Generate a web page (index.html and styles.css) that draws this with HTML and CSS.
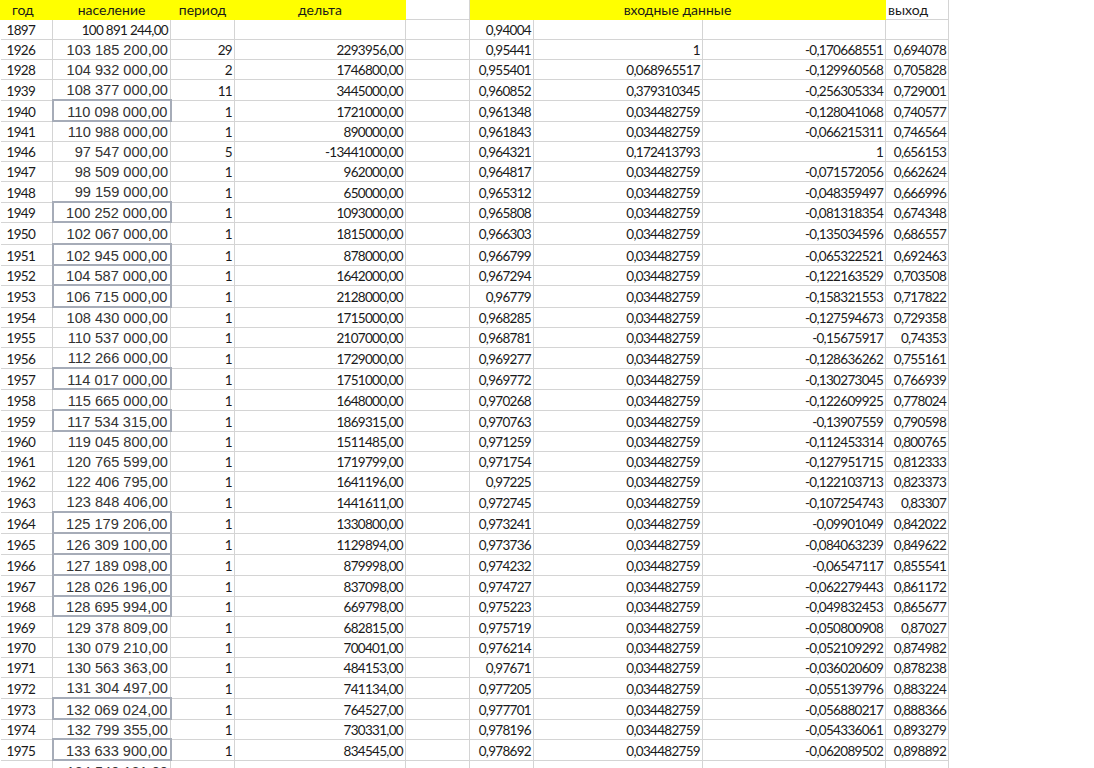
FILE: index.html
```html
<!DOCTYPE html>
<html lang="ru">
<head>
  <meta charset="UTF-8">
  <title>Население</title>
  <link rel="stylesheet" href="styles.css">
</head>
<body>
  <table class="sheet">
    <colgroup>
      <col class="c-year"><col class="c-pop"><col class="c-period"><col class="c-delta"><col class="c-gap">
      <col class="c-in1"><col class="c-in2"><col class="c-in3"><col class="c-out">
    </colgroup>
    <thead>
      <tr>
        <th class="hl year">год</th><th class="hl">население</th><th class="hl">период</th><th class="hl">дельта</th><th></th>
        <th class="hl" colspan="3">входные данные</th><th class="left">выход</th>
      </tr>
    </thead>
    <tbody id="rows"></tbody>
  </table>
  <script src="app.js"></script>
</body>
</html>
```

FILE: styles.css
```css
* {
  box-sizing: border-box;
}

body {
  margin: 0;
  height: 768px;
  overflow: hidden;
  background: #fff;
  font-family: Lato, "Open Sans", sans-serif;
  font-size: 14px;
  color: #1a1a1a;
}

.sheet {
  width: 948px;
  table-layout: fixed;
  border-collapse: collapse;
}

.c-year { width: 52px; }
.c-pop { width: 118px; }
.c-period { width: 64px; }
.c-delta { width: 171px; }
.c-gap { width: 64px; }
.c-in1 { width: 64px; }
.c-in2 { width: 169px; }
.c-in3 { width: 183px; }
.c-out { width: 63px; }

th, td {
  padding: 2px 2px 0;
  border: 1px solid #d4d4d4;
  white-space: nowrap;
  overflow: hidden;
  line-height: 16px;
  text-align: right;
}

/* цифры в Calibri уже, чем в Lato */
td {
  font-size: 13.5px;
  letter-spacing: -0.7px;
}

thead th {
  height: 19px;
  border-top: none;
  font-weight: normal;
  text-align: center;
}

.hl {
  background: #ffff00;
  border-color: #ffff00;
}

thead .year {
  text-align: left;
  padding-left: 11px;
}

thead .left {
  text-align: left;
}

.h20 { height: 20px; }
.h21 { height: 21px; }
.h22 { height: 22px; }

td:first-child {
  text-align: left;
  padding-left: 6px;
  border-left: none;
}

.pop {
  font-family: "Liberation Sans", Arial, sans-serif;
  font-size: 14.6px;
  letter-spacing: 0;
  color: #333;
}

.pop.small {
  font-family: Lato, sans-serif;
  font-size: 13.5px;
  letter-spacing: -0.7px;
  color: #1a1a1a;
}

.pop.boxed {
  border: 2px solid #a6acb8;
}
```

FILE: app.js
```js
// год, население, период, дельта, вход1, вход2, вход3, выход, рамка
const data = [
  ["1897", "100 891 244,00", "", "", "0,94004", "", "", "", 0],
  ["1926", "103 185 200,00", "29", "2293956,00", "0,95441", "1", "-0,170668551", "0,694078", 0],
  ["1928", "104 932 000,00", "2", "1746800,00", "0,955401", "0,068965517", "-0,129960568", "0,705828", 0],
  ["1939", "108 377 000,00", "11", "3445000,00", "0,960852", "0,379310345", "-0,256305334", "0,729001", 0],
  ["1940", "110 098 000,00", "1", "1721000,00", "0,961348", "0,034482759", "-0,128041068", "0,740577", 1],
  ["1941", "110 988 000,00", "1", "890000,00", "0,961843", "0,034482759", "-0,066215311", "0,746564", 0],
  ["1946", "97 547 000,00", "5", "-13441000,00", "0,964321", "0,172413793", "1", "0,656153", 0],
  ["1947", "98 509 000,00", "1", "962000,00", "0,964817", "0,034482759", "-0,071572056", "0,662624", 0],
  ["1948", "99 159 000,00", "1", "650000,00", "0,965312", "0,034482759", "-0,048359497", "0,666996", 0],
  ["1949", "100 252 000,00", "1", "1093000,00", "0,965808", "0,034482759", "-0,081318354", "0,674348", 1],
  ["1950", "102 067 000,00", "1", "1815000,00", "0,966303", "0,034482759", "-0,135034596", "0,686557", 0],
  ["1951", "102 945 000,00", "1", "878000,00", "0,966799", "0,034482759", "-0,065322521", "0,692463", 1],
  ["1952", "104 587 000,00", "1", "1642000,00", "0,967294", "0,034482759", "-0,122163529", "0,703508", 1],
  ["1953", "106 715 000,00", "1", "2128000,00", "0,96779", "0,034482759", "-0,158321553", "0,717822", 1],
  ["1954", "108 430 000,00", "1", "1715000,00", "0,968285", "0,034482759", "-0,127594673", "0,729358", 0],
  ["1955", "110 537 000,00", "1", "2107000,00", "0,968781", "0,034482759", "-0,15675917", "0,74353", 0],
  ["1956", "112 266 000,00", "1", "1729000,00", "0,969277", "0,034482759", "-0,128636262", "0,755161", 0],
  ["1957", "114 017 000,00", "1", "1751000,00", "0,969772", "0,034482759", "-0,130273045", "0,766939", 1],
  ["1958", "115 665 000,00", "1", "1648000,00", "0,970268", "0,034482759", "-0,122609925", "0,778024", 0],
  ["1959", "117 534 315,00", "1", "1869315,00", "0,970763", "0,034482759", "-0,13907559", "0,790598", 1],
  ["1960", "119 045 800,00", "1", "1511485,00", "0,971259", "0,034482759", "-0,112453314", "0,800765", 0],
  ["1961", "120 765 599,00", "1", "1719799,00", "0,971754", "0,034482759", "-0,127951715", "0,812333", 0],
  ["1962", "122 406 795,00", "1", "1641196,00", "0,97225", "0,034482759", "-0,122103713", "0,823373", 0],
  ["1963", "123 848 406,00", "1", "1441611,00", "0,972745", "0,034482759", "-0,107254743", "0,83307", 0],
  ["1964", "125 179 206,00", "1", "1330800,00", "0,973241", "0,034482759", "-0,09901049", "0,842022", 1],
  ["1965", "126 309 100,00", "1", "1129894,00", "0,973736", "0,034482759", "-0,084063239", "0,849622", 1],
  ["1966", "127 189 098,00", "1", "879998,00", "0,974232", "0,034482759", "-0,06547117", "0,855541", 1],
  ["1967", "128 026 196,00", "1", "837098,00", "0,974727", "0,034482759", "-0,062279443", "0,861172", 1],
  ["1968", "128 695 994,00", "1", "669798,00", "0,975223", "0,034482759", "-0,049832453", "0,865677", 1],
  ["1969", "129 378 809,00", "1", "682815,00", "0,975719", "0,034482759", "-0,050800908", "0,87027", 0],
  ["1970", "130 079 210,00", "1", "700401,00", "0,976214", "0,034482759", "-0,052109292", "0,874982", 0],
  ["1971", "130 563 363,00", "1", "484153,00", "0,97671", "0,034482759", "-0,036020609", "0,878238", 0],
  ["1972", "131 304 497,00", "1", "741134,00", "0,977205", "0,034482759", "-0,055139796", "0,883224", 0],
  ["1973", "132 069 024,00", "1", "764527,00", "0,977701", "0,034482759", "-0,056880217", "0,888366", 1],
  ["1974", "132 799 355,00", "1", "730331,00", "0,978196", "0,034482759", "-0,054336061", "0,893279", 0],
  ["1975", "133 633 900,00", "1", "834545,00", "0,978692", "0,034482759", "-0,062089502", "0,898892", 1],
  ["", "134 540 181,00", "", "", "", "", "", "", 0]
];

// высота строк в листе неодинаковая
const heights = [20, 20, 20, 21, 21, 20, 20, 20, 21, 20, 22, 21, 20, 22, 20, 20, 21, 21, 21, 21,
  20, 20, 20, 21, 21, 21, 21, 21, 20, 21, 20, 20, 21, 21, 20, 21, 21];

const tbody = document.getElementById("rows");
data.forEach((row, i) => {
  const tr = document.createElement("tr");
  tr.className = "h" + heights[i];
  // ячейки 0-7, пустая колонка вставляется после дельты
  [0, 1, 2, 3, null, 4, 5, 6, 7].forEach((k) => {
    const td = document.createElement("td");
    td.textContent = k === null ? "" : row[k];
    if (k === 1) {
      td.className = "pop";
      if (i === 0) td.classList.add("small");
      if (row[8]) td.classList.add("boxed");
    }
    tr.appendChild(td);
  });
  tbody.appendChild(tr);
});
```
